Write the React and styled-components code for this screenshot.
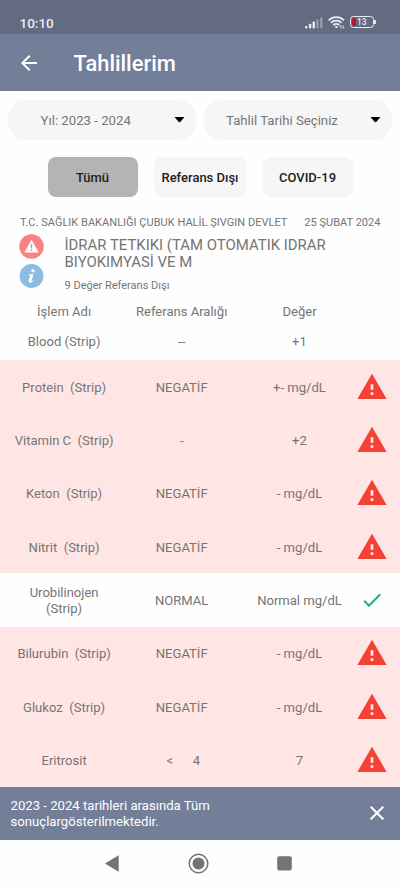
import React, { useState } from 'react';
import styled, { createGlobalStyle } from 'styled-components';

const GlobalStyle = createGlobalStyle`
    *{
        box-sizing: border-box;
    }
    body{
        margin: 0;
        background: #fefefe;
        font-family: Roboto, "Liberation Sans", sans-serif;
        color: #757575;
    }
    button{
        border: 0;
        padding: 0;
        background: none;
        font: inherit;
        color: inherit;
    }
    svg{
        display: block;
        flex: none;
    }
`;

const Screen = styled.div`
    width: 400px;
    height: 888px;
    display: flex;
    flex-direction: column;
    overflow: hidden;
`;

const StatusBar = styled.div`
    height: 34px;
    padding: 11px 24px 0 19.5px;
    display: flex;
    justify-content: space-between;
    background: #636b80;
    color: #e9ecf5;
`;

const Clock = styled.span`
    font-size: 13.5px;
    line-height: 24px;
    font-weight: 500;
`;

const AppBar = styled.header`
    height: 57px;
    padding: 1px 17px 0 16.5px;
    display: flex;
    align-items: center;
    gap: 33px;
    background: #737e98;
    color: #fff;
`;

const Title = styled.h1`
    margin: 0;
    padding-top: 2px;
    font-size: 21.9px;
    line-height: 26px;
    font-weight: 500;
`;

const Filters = styled.div`
    display: flex;
    gap: 8px;
    padding: 8.5px 8px 0;
`;

const Select = styled.button`
    width: 188px;
    height: 40.5px;
    padding: 1px 11px 0 ${props => props.$indent}px;
    display: flex;
    align-items: center;
    justify-content: space-between;
    border-radius: 18px;
    background: #f6f6f6;
    font-size: 13.2px;
`;

const Tabs = styled.div`
    display: grid;
    grid-template-columns: 90px 93px 90px;
    gap: 16px;
    padding: 16.5px 47.5px 0;
`;

const Tab = styled.button`
    height: 40.5px;
    padding-top: 1px;
    border-radius: 8px;
    background: ${props => props.$active ? '#b4b4b4' : '#f6f6f6'};
    color: #212121;
    font-size: 13px;
    font-weight: 500;
    white-space: nowrap;
`;

const ReportMeta = styled.div`
    display: flex;
    justify-content: space-between;
    padding: 19px 19.5px 0 20px;
    font-size: 11.05px;
    line-height: 14px;
    white-space: nowrap;
`;

const Report = styled.div`
    display: flex;
    height: 68.5px;
    padding: 3.5px 20px 0 19px;
    gap: 20.5px;
`;

const Marks = styled.div`
    display: flex;
    flex-direction: column;
    gap: 5px;
`;

const ReportName = styled.h2`
    margin: 0;
    padding-top: 3px;
    width: 300px;
    font-size: 14.93px;
    line-height: 17.6px;
    font-weight: 400;
`;

const ReportNote = styled.p`
    margin: 7.5px 0 0;
    font-size: 11px;
    line-height: 14px;
`;

const Row = styled.div`
    height: ${props => props.$height || 53.33}px;
    flex: none;
    display: grid;
    grid-template-columns: 117.6px 117.6px 118px minmax(0, 1fr);
    align-items: center;
    padding: 0 14px ${props => props.$bottom || 0}px 5.3px;
    background: ${props => props.$alert ? '#ffe6e4' : 'transparent'};
    font-size: 13.05px;
    line-height: 15.3px;
    text-align: center;
    white-space: pre-wrap;
`;

const Cell = styled.span`
    padding-top: 1.2px;
`;

const Mark = styled.div`
    display: flex;
    justify-content: center;
`;

const Snackbar = styled.div`
    height: 53px;
    flex: none;
    display: flex;
    align-items: center;
    justify-content: space-between;
    padding: 0 11px 0 10.5px;
    background: #737e98;
    color: #fff;
    font-size: 13.15px;
    line-height: 15.3px;
    white-space: pre-line;
`;

const SnackbarText = styled.span`
    padding-top: 1px;
`;

const NavBar = styled.nav`
    flex: 1;
    display: flex;
    align-items: center;
    justify-content: center;
    gap: 68.5px;
    padding-right: 3px;
`;

const SignalIcon = () => (
    <svg width="18" height="12" viewBox="0 0 18 12" fill="#e9ecf5">
        <rect x="0" y="9" width="2.4" height="2.4" rx=".8" />
        <rect x="3.9" y="6.7" width="2.4" height="4.7" rx=".8" />
        <rect x="7.6" y="4.4" width="2.4" height="7" rx=".8" />
        <rect x="11.4" y="2.2" width="2.2" height="9.2" rx=".8" opacity=".4" />
        <rect x="15.2" y=".2" width="2.2" height="11.2" rx=".8" opacity=".4" />
    </svg>
);

const WifiIcon = () => (
    <svg width="17" height="13" viewBox="0 0 17 13" fill="none" stroke="#e9ecf5" strokeWidth="1.8">
        <path d="M.6 4.3a11 11 0 0 1 15.4 0" />
        <path d="M3 6.8a7.6 7.6 0 0 1 10.6 0" />
        <path d="M5.3 9.2a4.4 4.4 0 0 1 6 0" />
        <path d="M6.6 10.8a2.5 2.5 0 0 1 3.4 0l-1.7 1.6z" fill="#e9ecf5" stroke="none" />
        <path d="M12.9 12.4v-3l-1 1.1M15.2 9.4v3l1-1.1" strokeWidth=".9" />
    </svg>
);

const StatusIcons = styled.div`
    display: flex;
    align-items: flex-start;
    padding-top: 5.5px;
`;

const Wifi = styled.div`
    margin: -.5px 5px 0 5px;
`;

const Battery = styled.div`
    width: 26px;
    height: 12px;
    margin-top: -.5px;
    display: flex;
    align-items: center;
`;

const BatteryCase = styled.div`
    width: 24px;
    height: 12px;
    padding: 1px;
    display: flex;
    align-items: center;
    border: 1.4px solid #e9ecf5;
    border-radius: 3.5px;
    font-size: 8.4px;
    line-height: 9px;
    font-weight: 500;
    gap: 1.5px;
`;

const BatteryLevel = styled.i`
    width: 3.6px;
    height: 8px;
    border-radius: 1.5px 0 0 1.5px;
    background: #b9192f;
`;

const BatteryTip = styled.i`
    width: 1.6px;
    height: 4.5px;
    border-radius: 0 1px 1px 0;
    background: #e9ecf5;
`;

const BackIcon = () => (
    <svg width="24" height="24" viewBox="0 0 24 24" fill="#fff">
        <path d="M20 11H7.83l5.59-5.59L12 4l-8 8 8 8 1.41-1.41L7.83 13H20v-2z" />
    </svg>
);

const Caret = () => (
    <svg width="11" height="6" viewBox="0 0 11 6">
        <path d="M.5 0h10L6.2 5q-.7.7-1.4 0z" fill="#000" />
    </svg>
);

const WarningIcon = () => (
    <svg width="32" height="32" viewBox="0 0 24 24" fill="#f44336">
        <path d="M1 21h22L12 2 1 21zm12-3h-2v-2h2v2zm0-4h-2v-4h2v4z" />
    </svg>
);

const CheckIcon = () => (
    <svg width="24" height="24" viewBox="0 0 24 24" fill="#15b08c">
        <path d="M9 16.17L4.83 12l-1.42 1.41L9 19 21 7l-1.41-1.41z" />
    </svg>
);

const RoundWarning = () => (
    <svg width="25" height="25" viewBox="0 0 25 25">
        <circle cx="12.5" cy="12.5" r="12.2" fill="#fa8085" />
        <path
            d="M12.5 6.2 19.3 18.2H5.9z"
            fill="#fff"
            stroke="#fff"
            strokeWidth=".6"
            strokeLinejoin="round"
        />
        <path d="M11.8 10h1.5l-.3 4.4h-.9z" fill="#fa8085" />
        <circle cx="12.55" cy="16.1" r=".85" fill="#fa8085" />
    </svg>
);

const RoundInfo = () => (
    <svg width="25" height="24" viewBox="0 0 25 24">
        <circle cx="12.5" cy="12" r="11.9" fill="#8bbde0" />
        <circle cx="14" cy="6.7" r="1.7" fill="#fff" />
        <path
            d="M10 10.2h4.6l-2 6.6c-.1.5.3.6.8.1l1-.9.4.5c-1 1.4-2.2 2.2-3.4 2.2-1.4 0-2.1-.8-1.7-2.1l1.4-4.7c.1-.5-.1-.7-.6-.7l-.8-.1z"
            fill="#fff"
        />
    </svg>
);

const CloseIcon = () => (
    <svg width="24" height="24" viewBox="0 0 24 24" fill="#fff">
        <path d="M19 6.41L17.59 5 12 10.59 6.41 5 5 6.41 10.59 12 5 17.59 6.41 19 12 13.41 17.59 19 19 17.59 13.41 12z" />
    </svg>
);

const NavBack = () => (
    <svg width="14" height="17" viewBox="0 0 14 17" fill="#747474">
        <path d="M13.7.3v16.4L.7 9q-.9-.5 0-1z" />
    </svg>
);

const NavHome = () => (
    <svg width="21" height="21" viewBox="0 0 21 21">
        <circle cx="10.5" cy="10.5" r="9.3" fill="none" stroke="#747474" strokeWidth="1.5" />
        <circle cx="10.5" cy="10.5" r="6" fill="#747474" />
    </svg>
);

const NavRecent = () => (
    <svg width="15" height="15" viewBox="0 0 15 15">
        <rect x=".2" y=".2" width="14.6" height="14.4" rx="2" fill="#747474" />
    </svg>
);

const tabs = ['Tümü', 'Referans Dışı', 'COVID-19'];

const results = [
    { name: 'Protein  (Strip)', range: 'NEGATİF', value: '+- mg/dL', alert: true },
    { name: 'Vitamin C  (Strip)', range: '-', value: '+2', alert: true },
    { name: 'Keton  (Strip)', range: 'NEGATİF', value: '- mg/dL', alert: true },
    { name: 'Nitrit  (Strip)', range: 'NEGATİF', value: '- mg/dL', alert: true },
    { name: 'Urobilinojen\n(Strip)', range: 'NORMAL', value: 'Normal mg/dL', alert: false },
    { name: 'Bilurubin  (Strip)', range: 'NEGATİF', value: '- mg/dL', alert: true },
    { name: 'Glukoz  (Strip)', range: 'NEGATİF', value: '- mg/dL', alert: true },
    { name: 'Eritrosit', range: ' <      4', value: '7', alert: true },
];

const App = () => {
    const [active, setActive] = useState(0);

    return (
        <Screen>
            <GlobalStyle />
            <StatusBar>
                <Clock>10:10</Clock>
                <StatusIcons>
                    <SignalIcon />
                    <Wifi><WifiIcon /></Wifi>
                    <Battery>
                        <BatteryCase>
                            <BatteryLevel />
                            13
                        </BatteryCase>
                        <BatteryTip />
                    </Battery>
                </StatusIcons>
            </StatusBar>
            <AppBar>
                <BackIcon />
                <Title>Tahlillerim</Title>
            </AppBar>
            <Filters>
                <Select $indent={32.5}>
                    Yıl: 2023 - 2024
                    <Caret />
                </Select>
                <Select $indent={22}>
                    Tahlil Tarihi Seçiniz
                    <Caret />
                </Select>
            </Filters>
            <Tabs>
                {tabs.map((tab, index) => (
                    <Tab key={tab} $active={index === active} onClick={() => setActive(index)}>
                        {tab}
                    </Tab>
                ))}
            </Tabs>
            <ReportMeta>
                <span>T.C. SAĞLIK BAKANLIĞI ÇUBUK HALİL ŞIVGIN DEVLET</span>
                <span>25 ŞUBAT 2024</span>
            </ReportMeta>
            <Report>
                <Marks>
                    <RoundWarning />
                    <RoundInfo />
                </Marks>
                <div>
                    <ReportName>İDRAR TETKIKI (TAM OTOMATIK IDRAR BIYOKIMYASİ VE M</ReportName>
                    <ReportNote>9 Değer Referans Dışı</ReportNote>
                </div>
            </Report>
            <Row $height={27}>
                <span>İşlem Adı</span>
                <span>Referans Aralığı</span>
                <span>Değer</span>
            </Row>
            <Row $height={34.5} $bottom={1.6}>
                <span>Blood (Strip)</span>
                <span>--</span>
                <span>+1</span>
            </Row>
            {results.map(item => (
                <Row key={item.name} $alert={item.alert}>
                    <Cell>{item.name}</Cell>
                    <Cell>{item.range}</Cell>
                    <Cell>{item.value}</Cell>
                    <Mark>{item.alert ? <WarningIcon /> : <CheckIcon />}</Mark>
                </Row>
            ))}
            <Snackbar>
                <SnackbarText>{'2023 - 2024 tarihleri arasında Tüm\nsonuçlargösterilmektedir.'}</SnackbarText>
                <CloseIcon />
            </Snackbar>
            <NavBar>
                <NavBack />
                <NavHome />
                <NavRecent />
            </NavBar>
        </Screen>
    );
};

export default App;
